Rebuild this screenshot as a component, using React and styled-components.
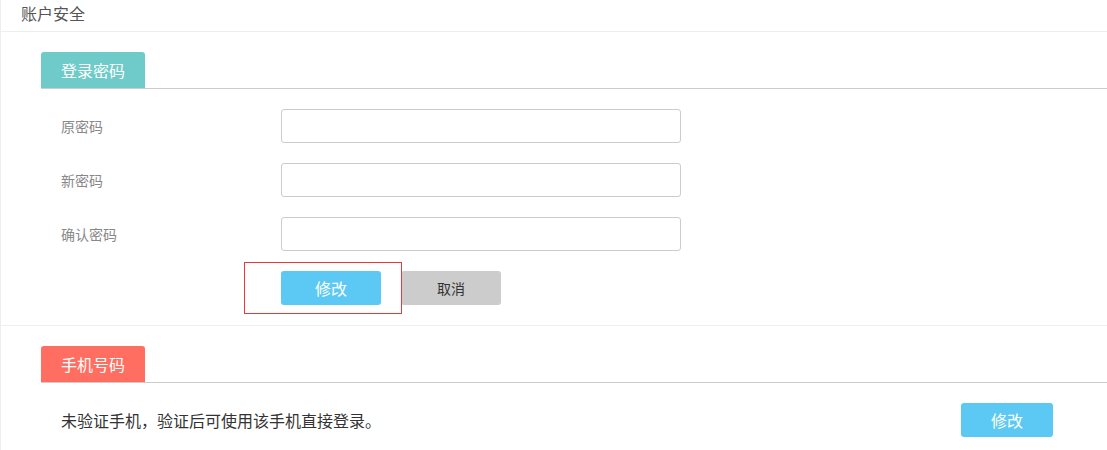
import React from 'react'
import styled, {createGlobalStyle} from 'styled-components'

const GlobalStyle = createGlobalStyle`
  body {
    margin: 0;
    background: #fff;
    font-family: "Noto Sans CJK SC", "Noto Sans", sans-serif;
  }
  * { box-sizing: border-box; }
`

const Page = styled.div`
  width: 1107px;
  height: 450px;
  border-left: 1px solid #eeeef2;
  overflow: hidden;
`

const Header = styled.div`
  height: 32px;
  line-height: 26px;
  padding-left: 20px;
  font-size: 16px;
  color: #555;
  border-bottom: 1px solid #eeeef0;
`

const Section = styled.section`
  padding: 20px 0 20px 40px;
  border-bottom: ${p => (p.divided ? '1px solid #eeeef0' : 'none')};
`

const TabBar = styled.div`
  display: flex;
  border-bottom: 1px solid #cccccc;
`

const Tab = styled.div`
  width: 104px;
  height: 36px;
  line-height: 36px;
  padding-left: 20px;
  font-size: 16px;
  color: #fff;
  background: ${p => p.color};
  border-radius: 3px 3px 0 0;
`

const Form = styled.div`
  display: flex;
  flex-direction: column;
  gap: 20px;
  padding: 20px 0 0 20px;
`

const Row = styled.div`
  display: flex;
  align-items: center;
`

const Label = styled.label`
  width: 220px;
  font-size: 14px;
  color: #888;
`

const Input = styled.input`
  width: 400px;
  height: 34px;
  border: 1px solid #cccccc;
  border-radius: 3px;
  outline: none;
`

const Actions = styled.div`
  position: relative;
  display: flex;
  gap: 20px;
  padding-left: 220px;
`

/* red marker box drawn over the submit button */
const Highlight = styled.div`
  position: absolute;
  left: 183px;
  top: -9px;
  width: 158px;
  height: 52px;
  border: 1px solid #e83a3a;
  pointer-events: none;
`

const Button = styled.button`
  width: ${p => p.w || 100}px;
  height: 34px;
  border: none;
  border-radius: 3px;
  font-family: inherit;
  font-size: ${p => (p.primary ? 16 : 14)}px;
  color: ${p => (p.primary ? '#fff' : '#333')};
  background: ${p => (p.primary ? '#5bc9f3' : '#cccccc')};
  cursor: pointer;
`

const PhoneRow = styled.div`
  display: flex;
  align-items: center;
  justify-content: space-between;
  padding: 20px 54px 0 20px;
`

const Note = styled.span`
  font-size: 16px;
  color: #333;
`

export default function App() {
  return (
    <Page>
      <GlobalStyle />
      <Header>账户安全</Header>
      <Section divided>
        <TabBar>
          <Tab color="#6ecbc9">登录密码</Tab>
        </TabBar>
        <Form>
          <Row>
            <Label>原密码</Label>
            <Input type="password" />
          </Row>
          <Row>
            <Label>新密码</Label>
            <Input type="password" />
          </Row>
          <Row>
            <Label>确认密码</Label>
            <Input type="password" />
          </Row>
          <Actions>
            <Highlight />
            <Button primary>修改</Button>
            <Button>取消</Button>
          </Actions>
        </Form>
      </Section>
      <Section>
        <TabBar>
          <Tab color="#ff6e61">手机号码</Tab>
        </TabBar>
        <PhoneRow>
          <Note>未验证手机，验证后可使用该手机直接登录。</Note>
          <Button primary w={92}>修改</Button>
        </PhoneRow>
      </Section>
    </Page>
  )
}
